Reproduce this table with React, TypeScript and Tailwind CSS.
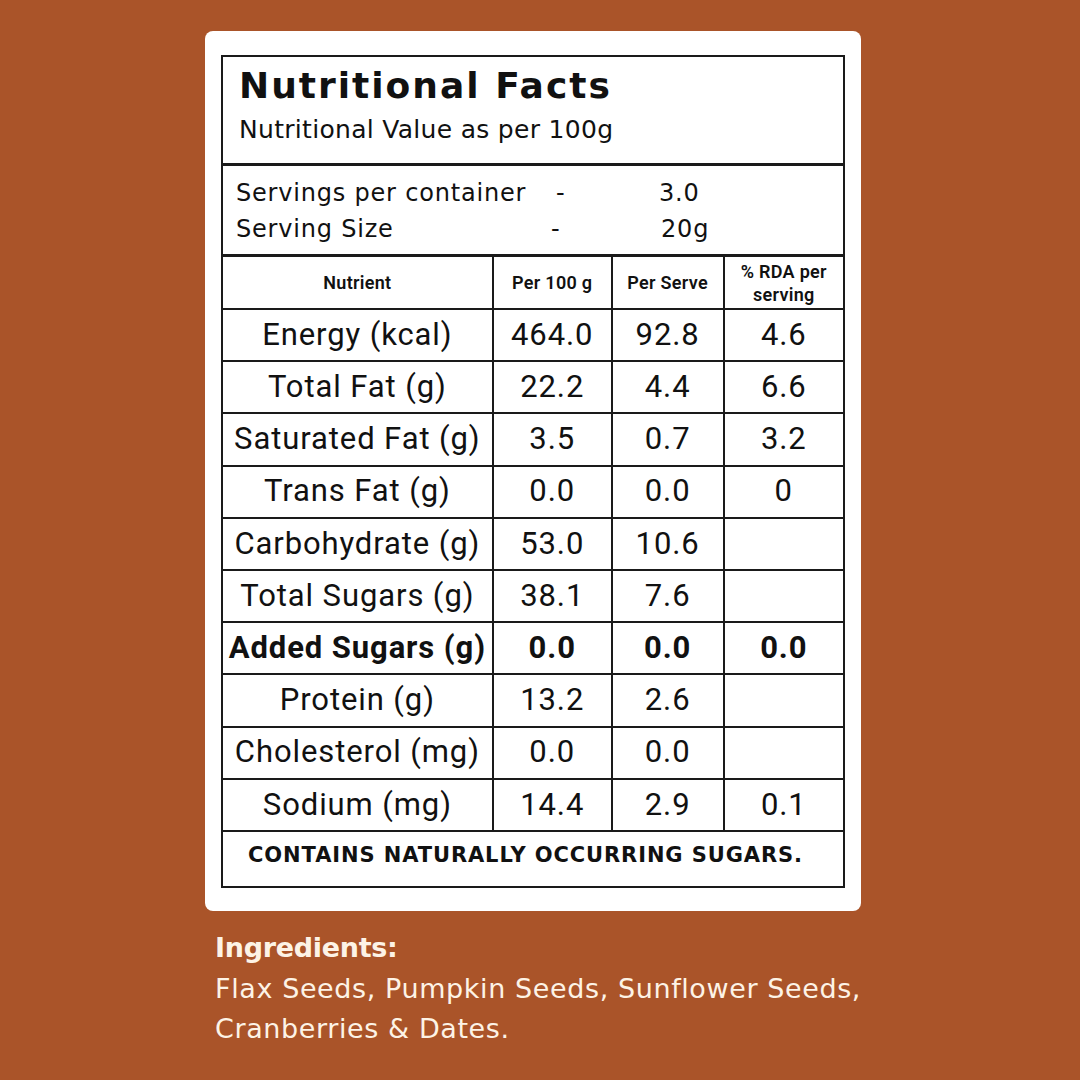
import React from 'react'

type Row = { name: string; per100: string; serve: string; rda: string; bold?: boolean }

const rows: Row[] = [
  { name: 'Energy (kcal)', per100: '464.0', serve: '92.8', rda: '4.6' },
  { name: 'Total Fat (g)', per100: '22.2', serve: '4.4', rda: '6.6' },
  { name: 'Saturated Fat (g)', per100: '3.5', serve: '0.7', rda: '3.2' },
  { name: 'Trans Fat (g)', per100: '0.0', serve: '0.0', rda: '0' },
  { name: 'Carbohydrate (g)', per100: '53.0', serve: '10.6', rda: '' },
  { name: 'Total Sugars (g)', per100: '38.1', serve: '7.6', rda: '' },
  { name: 'Added Sugars (g)', per100: '0.0', serve: '0.0', rda: '0.0', bold: true },
  { name: 'Protein (g)', per100: '13.2', serve: '2.6', rda: '' },
  { name: 'Cholesterol (mg)', per100: '0.0', serve: '0.0', rda: '' },
  { name: 'Sodium (mg)', per100: '14.4', serve: '2.9', rda: '0.1' },
]

// the label's display face is wide, DejaVu Sans gets closest on widths
const wide = "font-['DejaVu_Sans',sans-serif]"
const roboto = "font-['Roboto',sans-serif]"

export default function App() {
  return (
    <div className="w-[1080px] h-[1080px] bg-[#aa5429] pt-[31px] pl-[205px]">
      <div className="w-[656px] h-[880px] bg-white rounded-[8px] pt-[24px] pl-[16px]">
        <div className="w-[624px] border-2 border-[#1a1a1a] text-[#111]">
          <div className={`h-[109px] border-b-[3px] border-[#1a1a1a] pl-[16px] pt-[6px] ${wide}`}>
            <h1 className="text-[36px] font-bold leading-[46px] tracking-[2px]">Nutritional Facts</h1>
            <p className="mt-[6px] text-[25px] leading-[30px] tracking-[0.3px]">Nutritional Value as per 100g</p>
          </div>
          <div className={`h-[91px] border-b-[3px] border-[#1a1a1a] pl-[13px] pt-[9px] text-[24px] leading-[36px] tracking-[0.8px] ${wide}`}>
            <div className="flex">
              <span className="w-[320px]">Servings per container</span>
              <span className="w-[103px]">-</span>
              <span>3.0</span>
            </div>
            <div className="flex">
              <span className="w-[315px]">Serving Size</span>
              <span className="w-[110px]">-</span>
              <span>20g</span>
            </div>
          </div>
          <table className={`w-full border-collapse ${roboto}`}>
            <colgroup>
              <col className="w-[270px]" />
              <col className="w-[120px]" />
              <col className="w-[113px]" />
              <col className="w-[121px]" />
            </colgroup>
            <thead>
              <tr className="h-[52px] text-[18px] leading-[23px] tracking-[0.3px]">
                <th className="border-2 border-t-0 border-l-0 border-[#1a1a1a] font-semibold">Nutrient</th>
                <th className="border-2 border-t-0 border-[#1a1a1a] font-semibold">Per 100 g</th>
                <th className="border-2 border-t-0 border-[#1a1a1a] font-semibold">Per Serve</th>
                <th className="border-2 border-t-0 border-r-0 border-[#1a1a1a] font-semibold">% RDA per<br />serving</th>
              </tr>
            </thead>
            <tbody>
              {rows.map(r => (
                <tr key={r.name} className={`h-[52.2px] text-center text-[31px] tracking-[0.9px] ${r.bold ? 'font-bold' : ''}`}>
                  <td className="border-2 border-l-0 border-[#1a1a1a] whitespace-nowrap">{r.name}</td>
                  <td className="border-2 border-[#1a1a1a]">{r.per100}</td>
                  <td className="border-2 border-[#1a1a1a]">{r.serve}</td>
                  <td className="border-2 border-r-0 border-[#1a1a1a]">{r.rda}</td>
                </tr>
              ))}
              <tr className="h-[55px]">
                <td colSpan={4} className={`align-top pl-[25px] pt-[10px] text-[21px] leading-[26px] font-bold tracking-[0.9px] ${wide}`}>
                  CONTAINS NATURALLY OCCURRING SUGARS.
                </td>
              </tr>
            </tbody>
          </table>
        </div>
      </div>
      <div className={`ml-[10px] pt-[18px] text-[#fdf3e6] ${wide}`}>
        <h2 className="text-[27px] font-bold leading-[38px] tracking-[-0.3px]">Ingredients:</h2>
        <p className="mt-[2px] text-[27px] leading-[40px] tracking-[0.6px] w-[700px]">
          Flax Seeds, Pumpkin Seeds, Sunflower Seeds,
          <br />
          Cranberries &amp; Dates.
        </p>
      </div>
    </div>
  )
}
